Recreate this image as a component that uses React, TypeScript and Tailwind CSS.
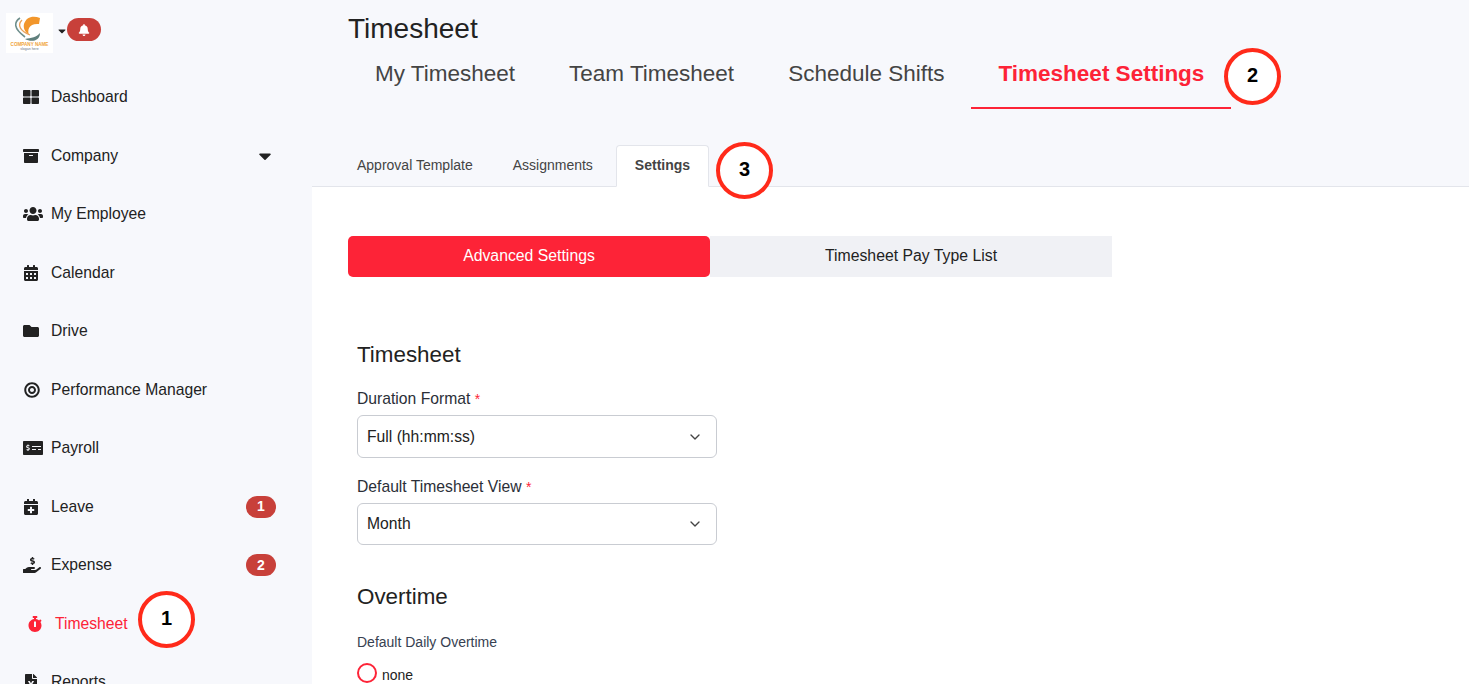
import { ReactNode } from "react";
import {
  FaArchive,
  FaBell,
  FaBullseye,
  FaCalendarAlt,
  FaCalendarPlus,
  FaCaretDown,
  FaFileExcel,
  FaFolder,
  FaHandHoldingUsd,
  FaMoneyCheckAlt,
  FaStopwatch,
  FaThLarge,
  FaUsers,
} from "react-icons/fa";
import { FiChevronDown } from "react-icons/fi";

interface NavItem {
  label: string;
  icon: ReactNode;
  badge?: string;
  caret?: boolean;
  active?: boolean;
}

const NAV: NavItem[] = [
  { label: "Dashboard", icon: <FaThLarge size={16} /> },
  { label: "Company", icon: <FaArchive size={16} />, caret: true },
  { label: "My Employee", icon: <FaUsers size={20} /> },
  { label: "Calendar", icon: <FaCalendarAlt size={16} /> },
  { label: "Drive", icon: <FaFolder size={16} /> },
  { label: "Performance Manager", icon: <FaBullseye size={16} className="ml-px" /> },
  { label: "Payroll", icon: <FaMoneyCheckAlt size={20} /> },
  { label: "Leave", icon: <FaCalendarPlus size={16} />, badge: "1" },
  { label: "Expense", icon: <FaHandHoldingUsd size={18} />, badge: "2" },
  { label: "Timesheet", icon: <FaStopwatch size={16} />, active: true },
  { label: "Reports", icon: <FaFileExcel size={16} /> },
];

function Logo() {
  return (
    <div className="w-[47px] h-[40px] bg-white flex flex-col items-center shrink-0">
      <svg viewBox="0 0 47 29" className="w-[47px] h-[29px] shrink-0">
        <path d="M34 5 C27 2 20 4 18 11 C17 15 19 19 23 22 C21 17 23 10 33 11 Z" fill="#f2962b" />
        <path d="M14 5 C8 9 7 15 19 24" fill="none" stroke="#6f8f8c" strokeWidth="1.6" />
        <path d="M16 7 C11 12 14 18 24 22" fill="none" stroke="#e9a35c" strokeWidth="1.3" />
        <path d="M19 26 C24 29 34 29 34 20 C31 24 25 25 19 26 Z" fill="#5f7f7c" />
      </svg>
      <span className="text-[4.6px] leading-[5px] font-bold text-[#f0a33c] whitespace-nowrap">COMPANY NAME</span>
      <span className="text-[3.5px] leading-[4px] text-gray-500 whitespace-nowrap">slogan here</span>
    </div>
  );
}

function Sidebar() {
  return (
    <aside className="w-[312px] shrink-0 bg-[#f7f8fc]">
      <div className="h-[68px] pl-[6px] pt-[13px] flex items-start">
        <Logo />
        <FaCaretDown size={12} className="text-[#222] mt-[12px] ml-[3px] -mr-[1px] shrink-0" />
        <span className="w-[34px] h-[23px] mt-[5px] rounded-full bg-[#c8403a] flex items-center justify-center text-white">
          <FaBell size={12} />
        </span>
      </div>
      <nav>
        {NAV.map((item) => (
          <div
            key={item.label}
            className={`h-[58.5px] flex items-center text-[15.7px] ${
              item.active ? "pl-[27px] text-[#fd2337]" : "pl-[23px] text-[#222]"
            }`}
          >
            <span className="w-[28px] shrink-0 flex items-center">{item.icon}</span>
            <span>{item.label}</span>
            {item.caret && <FaCaretDown size={20} className="ml-auto mr-[37px] text-[#222]" />}
            {item.badge && (
              <span className="ml-auto mr-[36px] w-[30px] h-[22px] rounded-full bg-[#c8403a] text-white text-[14px] font-bold flex items-center justify-center">
                {item.badge}
              </span>
            )}
          </div>
        ))}
      </nav>
    </aside>
  );
}

function Callout({ n, className }: { n: number; className: string }) {
  return (
    <div
      className={`absolute w-[57px] h-[57px] pb-[3px] rounded-full bg-white border-[4px] border-[#ff2a1a] flex items-center justify-center text-[20px] font-bold text-black ${className}`}
    >
      {n}
    </div>
  );
}

function Select({ value, short }: { value: string; short?: boolean }) {
  return (
    <div
      className={`w-[360px] ${
        short ? "h-[42px]" : "h-[43px]"
      } rounded-[6px] border border-[#c9ccd2] bg-white pl-[9px] pr-[13px] flex items-center justify-between text-[15.7px] text-[#222]`}
    >
      {value}
      <FiChevronDown size={16} className="text-[#444]" />
    </div>
  );
}

function Label({ children }: { children: ReactNode }) {
  return (
    <div className="text-[15.7px] text-[#2b2f38] leading-[24px]">
      {children} <span className="text-[#fd2337] text-[14px]">*</span>
    </div>
  );
}

export default function App() {
  return (
    <div className="relative w-full h-[684px] overflow-hidden flex bg-white font-['Liberation_Sans',Arial,sans-serif]">
      <Sidebar />
      <main className="flex-1 min-w-0">
        <div className="h-[187px] bg-[#f7f8fc] border-b border-[#e3e5eb] flex flex-col">
          <h1 className="pl-[36px] pt-[12px] text-[28px] leading-[34px] text-[#222]">Timesheet</h1>
          <div className="pl-[36px] flex">
            {["My Timesheet", "Team Timesheet", "Schedule Shifts"].map((t) => (
              <div key={t} className="px-[27px] h-[63px] pb-[8px] flex items-center text-[22.5px] text-[#444]">
                {t}
              </div>
            ))}
            <div className="px-[27px] h-[63px] pb-[6px] flex items-center text-[22.5px] font-bold text-[#fd2337] border-b-2 border-[#fd2337]">
              Timesheet Settings
            </div>
          </div>
          <div className="pl-[26px] flex items-end mt-auto -mb-px text-[14px] text-[#444]">
            <div className="h-[42px] px-[19px] pb-[2px] flex items-center">Approval Template</div>
            <div className="h-[42px] ml-[2px] px-[19px] pb-[2px] flex items-center">Assignments</div>
            <div className="h-[42px] ml-[4px] px-[18px] pb-[1px] flex items-center font-bold bg-white border border-[#e3e5eb] border-b-white rounded-t-[4px]">
              Settings
            </div>
          </div>
        </div>

        <div className="pl-[36px] pt-[49px]">
          <div className="flex w-[764px] h-[41px] text-[15.8px]">
            <div className="w-[362px] pb-[1px] rounded-[5px] bg-[#fd2337] text-white flex items-center justify-center">
              Advanced Settings
            </div>
            <div className="flex-1 pb-[1px] bg-[#f0f1f5] text-[#222] flex items-center justify-center">
              Timesheet Pay Type List
            </div>
          </div>

          <div className="pl-[9px] pt-[64px]">
            <h2 className="text-[22.4px] leading-[28px] text-[#222]">Timesheet</h2>
            <div className="mt-[18px]">
              <Label>Duration Format</Label>
            </div>
            <div className="mt-[4px]">
              <Select value="Full (hh:mm:ss)" />
            </div>
            <div className="mt-[17px]">
              <Label>Default Timesheet View</Label>
            </div>
            <div className="mt-[4px]">
              <Select value="Month" short />
            </div>
            <h2 className="mt-[38px] text-[22.4px] leading-[28px] text-[#222]">Overtime</h2>
            <div className="mt-[21px] text-[14px] leading-[20px] text-[#374151]">Default Daily Overtime</div>
            <div className="mt-[11px] flex items-start gap-[5px] text-[14px] text-[#222]">
              <span className="w-[20px] h-[20px] rounded-full border-2 border-[#fd2337]" />
              <span className="mt-[2px]">none</span>
            </div>
          </div>
        </div>
      </main>

      <Callout n={1} className="left-[138px] top-[591px]" />
      <Callout n={2} className="left-[1224px] top-[48px]" />
      <Callout n={3} className="left-[716px] top-[142px]" />
    </div>
  );
}
